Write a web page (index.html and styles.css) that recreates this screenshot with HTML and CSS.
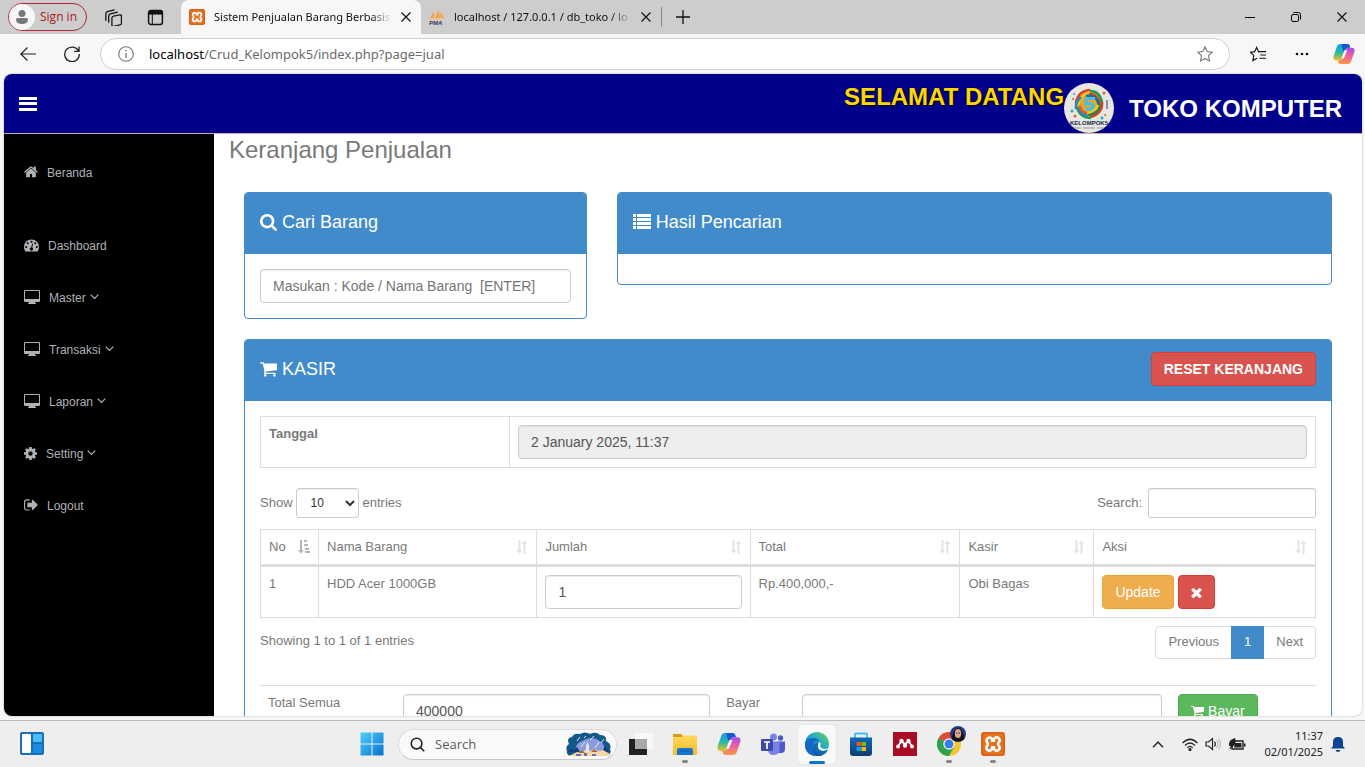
FILE: index.html
```html
<!DOCTYPE html>
<html lang="id">
<head>
<meta charset="utf-8">
<title>Sistem Penjualan Barang Berbasis Web</title>
<link rel="stylesheet" href="styles.css">
</head>
<body>
<svg class="defs" aria-hidden="true">
  <defs>
    <linearGradient id="g-win" x1="0" y1="0" x2="1" y2="1"><stop offset="0" stop-color="#4fd0fb"/><stop offset="1" stop-color="#0571cf"/></linearGradient>
    <linearGradient id="g-cp1" x1="0" y1="0" x2="0" y2="1"><stop offset="0" stop-color="#1b9ce8"/><stop offset=".5" stop-color="#20b9a6"/><stop offset="1" stop-color="#f0c31e"/></linearGradient>
    <linearGradient id="g-cp2" x1="0" y1="0" x2="0" y2="1"><stop offset="0" stop-color="#a44cf0"/><stop offset=".5" stop-color="#f0609a"/><stop offset="1" stop-color="#fa9a48"/></linearGradient>
    <linearGradient id="g-edge" x1="0" y1="1" x2="1" y2="0"><stop offset="0" stop-color="#0d63c5"/><stop offset=".5" stop-color="#1ba4d8"/><stop offset="1" stop-color="#63d84e"/></linearGradient>
    <linearGradient id="g-fold" x1="0" y1="0" x2="0" y2="1"><stop offset="0" stop-color="#ffda5f"/><stop offset="1" stop-color="#fbb922"/></linearGradient>
    <linearGradient id="g-store" x1="0" y1="0" x2="0" y2="1"><stop offset="0" stop-color="#0b6cb8"/><stop offset="1" stop-color="#113c73"/></linearGradient>
  </defs>
  <symbol id="i-copilot" viewBox="0 0 24 24">
    <path d="M8 1h7.500c1.500 0 2.300.8 2.700 2l.5 2h-2.200c-1.500 0-2.400.8-2.900 2.300l-2.900 9C10.200 18 9 19 7 19H3.600C1 19 0 17 .6 14.500L4.200 4C4.800 2 6 1 8 1z" fill="url(#g-cp1)"/>
    <path d="M10 1h5.500c1.500 0 2.300.8 2.700 2l.6 2.300h-2.600c-1.300 0-2.300.7-2.800 2L12 10 9.500 4z" fill="#1557cf"/>
    <path d="M16 23H8.500c-1.500 0-2.300-.8-2.700-2l-.5-2h2.200c1.500 0 2.400-.8 2.900-2.300l2.900-9C13.800 6 15 5.300 17 5.300h3.400C23 5.300 24 7 23.400 9.500L19.800 20c-.6 2-1.800 3-3.800 3z" fill="url(#g-cp2)"/>
    <path d="M12.300 8h3.300l-3.700 9H9.300z" fill="#fff" opacity=".9"/>
  </symbol>
  <symbol id="i-xampp" viewBox="0 0 24 24">
    <rect width="24" height="24" rx="3" fill="#e86f1c"/><rect x="1" y="1" width="22" height="22" rx="2" fill="none" stroke="#c65a18" stroke-width="1"/>
    <path d="M8.500 5.500a3 3 0 0 0-2 5.200q1 1.300 0 2.600a3 3 0 1 0 4.600 3.600v-1.500h1.800v1.500a3 3 0 1 0 4.600-3.600q-1-1.300 0-2.600a3 3 0 1 0-4.600-3.600v1.500h-1.800V7.100a3 3 0 0 0-2.600-1.600z" fill="none" stroke="#fff" stroke-width="2.600"/>
  </symbol>
  <symbol id="i-cart" viewBox="0 0 1792 1792"><path d="M704 1536q0 52-38 90t-90 38-90-38-38-90 38-90 90-38 90 38 38 90zm896 0q0 52-38 90t-90 38-90-38-38-90 38-90 90-38 90 38 38 90zm128-1088v512q0 24-16.500 42.500t-40.500 21.500l-1044 122q13 60 13 70 0 16-24 64h920q26 0 45 19t19 45-19 45-45 19h-1024q-26 0-45-19t-19-45q0-11 8-31.500t16-36 21.500-40 15.500-29.500l-177-823h-204q-26 0-45-19t-19-45 19-45 45-19h256q16 0 28.500 6.500t19.500 15.500 13 24.500 8 26 5.500 29.500 4.500 26h1201q26 0 45 19t19 45z"/></symbol>
  <symbol id="i-desktop" viewBox="0 0 16 14"><path d="M1 0h14a1 1 0 0 1 1 1v10a1 1 0 0 1-1 1h-4v1h1v1H4v-1h1v-1H1a1 1 0 0 1-1-1V1a1 1 0 0 1 1-1zm0 1v8h14V1z" fill-rule="evenodd"/></symbol>
  <symbol id="i-down" viewBox="0 0 9 6"><path d="M.7.700 4.500 4.500 8.300.7" fill="none" stroke="currentColor" stroke-width="1.200"/></symbol>
  <symbol id="i-sort" viewBox="0 0 12 14"><path d="M2.500 0h2v10h2L3.500 13.500.2 10h2.300zM7.500 14h2V4h2L8.500.5 5.500 4h2z"/></symbol>
  <symbol id="i-x" viewBox="0 0 10 10"><path d="M.5.500l9 9M9.500.5l-9 9" fill="none" stroke="currentColor" stroke-width="1.200"/></symbol>
</svg>

<header class="tabs">
  <button class="signin"><svg viewBox="0 0 26 26"><circle cx="13" cy="13" r="13" fill="#f7f7f7"/><circle cx="13" cy="9.500" r="3.500" fill="#777"/><path d="M7 15.500a1.500 1.500 0 0 1 1.500-1.500h9a1.500 1.500 0 0 1 1.500 1.500c0 3-2.500 4.500-6 4.500s-6-1.500-6-4.500z" fill="#777"/></svg>Sign in</button>
  <button class="tool tool-work" aria-label="Workspaces"><svg viewBox="0 0 16 16" fill="none" stroke="#111" stroke-width="1.200"><rect x="6.500" y="5.500" width="9" height="9.500" rx="1.500" transform="skewY(-12) translate(0 3)"/><path d="M3.500 13V6.500Q3.500 5 5 4.500L12 3M.8 11V4.500Q.8 3 2.300 2.500L9 .8"/></svg></button>
  <button class="tool tool-menu" aria-label="Tab actions"><svg viewBox="0 0 16 16" fill="none" stroke="#111" stroke-width="1.400"><rect x="1.500" y="1.500" width="13" height="13" rx="2"/><path d="M1.500 3.500h13" stroke-width="3.500"/><path d="M5 4v10" stroke-width="1"/></svg></button>
  <div class="tab tab-on"><svg class="fav"><use href="#i-xampp"/></svg><span class="tab-t">Sistem Penjualan Barang Berbasis</span><button aria-label="Close tab"><svg class="x"><use href="#i-x"/></svg></button></div>
  <div class="tab"><svg class="fav" viewBox="0 0 16 16"><path d="M1 9.500 5 2v7zM6 9.500 9.500.5 11 9zM11 8l1-5 3.500 6z" fill="#f9a13a"/><path d="M1 10h14.500" stroke="#f7c37f"/><text x="0" y="16" class="pma">PMA</text></svg><span class="tab-t">localhost / 127.0.0.1 / db_toko / lo</span><button aria-label="Close tab"><svg class="x"><use href="#i-x"/></svg></button></div>
  <button class="newtab" aria-label="New tab"><svg viewBox="0 0 14 14"><path d="M7 0v14M0 7h14" stroke="#111" stroke-width="1.300"/></svg></button>
  <div class="winctl">
    <button aria-label="Minimize"><svg viewBox="0 0 10 10"><path d="M0 5.500h10" stroke="#000"/></svg></button>
    <button aria-label="Restore"><svg viewBox="0 0 10 10" fill="none" stroke="#000"><rect x=".5" y="2.500" width="7" height="7" rx="1.500"/><path d="M2.500.5H7.500a2 2 0 0 1 2 2V7.500"/></svg></button>
    <button aria-label="Close"><svg class="x"><use href="#i-x"/></svg></button>
  </div>
</header>

<nav class="bar">
  <button aria-label="Back"><svg viewBox="0 0 16 16" fill="none" stroke="#222" stroke-width="1.200"><path d="M16 8H.8M7.500 1.500.8 8l6.700 6.500"/></svg></button>
  <button aria-label="Reload"><svg viewBox="0 0 16 16" fill="none" stroke="#222" stroke-width="1.300"><path d="M14.500 5A7.300 7.300 0 1 0 15.300 8M15 .5v4.800h-4.800"/></svg></button>
  <div class="omni">
    <svg class="info" viewBox="0 0 16 16" fill="none" stroke="#777" stroke-width="1.100"><circle cx="8" cy="8" r="7.300"/><path d="M8 7v5M8 4v1.500" stroke-width="1.300"/></svg>
    <span class="url"><b>localhost</b>/Crud_Kelompok5/index.php?page=jual</span>
    <svg class="info" viewBox="0 0 16 16" fill="none" stroke="#777" stroke-width="1.100"><path d="M8 .8l2.200 4.700 5 .7-3.700 3.500 1 5.200L8 12.400 3.500 14.900l1-5.200L.8 6.200l5-.7z"/></svg>
  </div>
  <button aria-label="Favorites"><svg viewBox="0 0 17 16" fill="none" stroke="#111" stroke-width="1.200"><path d="M10.500 5.500H9L7 1 5 5.500l-4.500.7L4 9.500 3 15l4.500-2.500M10.500 5.500H17M11 9h6M10 12.500h7"/></svg></button>
  <button aria-label="More"><svg viewBox="0 0 16 16" fill="#111"><circle cx="3" cy="8" r="1.300"/><circle cx="8" cy="8" r="1.300"/><circle cx="13" cy="8" r="1.300"/></svg></button>
  <button class="cp" aria-label="Copilot"><svg><use href="#i-copilot"/></svg></button>
</nav>

<div class="page">
  <header class="top">
    <button class="burger" aria-label="Toggle navigation"><svg viewBox="0 0 18 14" fill="#fff"><path d="M0 0h18v3H0zM0 5h18v3H0zM0 11h18v3H0z"/></svg></button>
    <span class="welcome">SELAMAT DATANG</span>
    <svg class="logo" viewBox="0 0 50 50">
      <circle cx="25" cy="25" r="25" fill="#e6e6e2"/>
      <circle cx="25" cy="21" r="14" fill="#f0a51e"/>
      <g fill="none" stroke-width="2.600">
        <path d="M12 20q2-12 14-13" stroke="#d8402a"/><path d="M14 22q2-12 14-13" stroke="#f4c622"/><path d="M12 26q-1-7 5-12" stroke="#2387c8"/>
        <path d="M26 8q10 0 12 12" stroke="#1d9c58"/><path d="M25 11q9 0 11 12" stroke="#d8402a"/><path d="M22 13q11-2 13 10" stroke="#1a6ba8"/>
        <path d="M38 19q1 11-12 15" stroke="#d8402a"/><path d="M36 21q-1 9-12 11" stroke="#1d8a4c"/><path d="M34 22q-2 6-11 8" stroke="#f4c622"/>
        <path d="M27 35q-11 0-14-11" stroke="#1d9c58"/><path d="M24 33q-8-1-9-9" stroke="#2387c8"/><path d="M23 30q-6 0-7-7" stroke="#e3592b"/>
      </g>
      <path d="M31 15.500h-8.500l-.8 5.500q7.500-1.500 7.300 2.500t-8 2" fill="none" stroke="#48bde6" stroke-width="3.200"/>
      <g fill="#e8612f"><circle cx="40" cy="10" r="1.500"/><circle cx="9" cy="16" r="1"/><circle cx="11" cy="33" r="1.500"/><circle cx="41" cy="32" r="1"/></g>
      <g fill="#2fa6cf"><circle cx="8" cy="28" r="1.500"/><circle cx="38" cy="35" r="1.500"/><circle cx="10" cy="11" r="1"/><path d="M42 17h2v9h-2z" fill="#8596a8"/></g>
      <text x="25" y="42" class="logo-t">KELOMPOK5</text><path d="M10 45h7M33 45h7M19 45h12" stroke="#777" stroke-width=".7"/>
    </svg>
    <span class="brand">TOKO KOMPUTER</span>
  </header>

  <div class="cols">
    <aside class="side">
      <a class="first" href="#"><svg class="i14" viewBox="64 200 1664 1440"><path d="M1472 992v480q0 26-19 45t-45 19h-384v-384h-256v384h-384q-26 0-45-19t-19-45v-480q0-1 .5-3t.5-3l575-474 575 474q1 2 1 6zm223-69l-62 74q-8 9-21 11h-3q-13 0-21-7l-692-577-692 577q-12 8-24 7-13-2-21-11l-62-74q-8-10-7-23.500t11-21.500l719-599q32-26 76-26t76 26l244 204v-195q0-14 9-23t23-9h192q14 0 23 9t9 23v408l219 182q10 8 11 21.500t-7 23.500z"/></svg><span>Beranda</span></a>
      <a href="#"><svg class="i15" viewBox="0 0 16 13"><path fill-rule="evenodd" d="M8 0a8 8 0 0 1 8 8q0 2.600-1.200 4.500l-.8.500H2l-.8-.5Q0 10.600 0 8a8 8 0 0 1 8-8zM8 1.300a1.100 1.100 0 1 0 0 2.200 1.100 1.100 0 0 0 0-2.200zM4 3a1.100 1.100 0 1 0 0 2.200A1.100 1.100 0 0 0 4 3zm8 0a1.100 1.100 0 1 0 0 2.200A1.100 1.100 0 0 0 12 3zM2.300 7a1.100 1.100 0 1 0 0 2.200 1.100 1.100 0 0 0 0-2.200zm11.400 0a1.100 1.100 0 1 0 0 2.200 1.100 1.100 0 0 0 0-2.200zM8.700 4.500 7.700 8.500a1.700 1.700 0 1 0 1 .2l1-4z"/></svg><span>Dashboard</span></a>
      <a href="#"><svg class="i16"><use href="#i-desktop"/></svg><span>Master</span><svg class="dn"><use href="#i-down"/></svg></a>
      <a href="#"><svg class="i16"><use href="#i-desktop"/></svg><span>Transaksi</span><svg class="dn"><use href="#i-down"/></svg></a>
      <a href="#"><svg class="i16"><use href="#i-desktop"/></svg><span>Laporan</span><svg class="dn"><use href="#i-down"/></svg></a>
      <a href="#"><svg class="i13" viewBox="128 128 1536 1536"><path d="M1152 896q0-106-75-181t-181-75-181 75-75 181 75 181 181 75 181-75 75-181zm512-109v222q0 12-8 23t-20 13l-185 28q-19 54-39 91 35 50 107 138 10 12 10 25t-9 23q-27 37-99 108t-94 71q-12 0-26-9l-138-108q-44 23-91 38-16 136-29 186-7 28-36 28h-222q-14 0-24.500-8.500t-11.500-21.500l-28-184q-49-16-90-37l-141 107q-10 9-25 9-14 0-25-11-126-114-165-168-7-10-7-23 0-12 8-23 15-21 51-66.500t54-70.500q-27-50-41-99l-183-27q-13-2-21-12.500t-8-23.500v-222q0-12 8-23t19-13l186-28q14-46 39-92-40-57-107-138-10-12-10-24 0-10 9-23 26-36 98.500-107.500t94.500-71.500q13 0 26 10l138 107q44-23 91-38 16-136 29-186 7-28 36-28h222q14 0 24.500 8.500t11.500 21.500l28 184q49 16 90 37l142-107q9-9 24-9 13 0 25 10 129 119 165 170 7 8 7 22 0 12-8 23-15 21-51 66.500t-54 70.500q26 50 41 98l183 28q13 2 21 12.500t8 23.500z"/></svg><span>Setting</span><svg class="dn"><use href="#i-down"/></svg></a>
      <a href="#"><svg class="i14" viewBox="64 100 1600 1600"><path d="M704 1440q0 4 1 20t.5 26.500-3 23.500-10 19.500-20.500 6.500h-320q-119 0-203.500-84.500t-84.500-203.500v-704q0-119 84.500-203.500t203.500-84.500h320q13 0 22.500 9.500t9.500 22.500q0 4 1 20t.5 26.500-3 23.500-10 19.500-20.500 6.500h-320q-66 0-113 47t-47 113v704q0 66 47 113t113 47h312l11.500 1 11.500 3 8 5.500 7 9 2 13.500zm928-544q0 26-19 45l-544 544q-19 19-45 19t-45-19-19-45v-288h-448q-26 0-45-19t-19-45v-384q0-26 19-45t45-19h448v-288q0-26 19-45t45-19 45 19l544 544q19 19 19 45z"/></svg><span>Logout</span></a>
    </aside>

    <main class="main">
      <h1>Keranjang Penjualan</h1>
      <div class="row">
        <div class="c4"><section class="panel">
          <h2 class="ph"><svg viewBox="64 128 1664 1664"><path d="M1216 832q0-185-131.500-316.500t-316.500-131.500-316.500 131.500-131.500 316.500 131.500 316.500 316.500 131.500 316.500-131.500 131.500-316.500zm512 832q0 52-38 90t-90 38q-54 0-90-38l-343-342q-179 124-399 124-143 0-273.500-55.500t-225-150-150-225-55.500-273.500 55.500-273.500 150-225 225-150 273.500-55.500 273.500 55.500 225 150 150 225 55.500 273.500q0 220-124 399l343 343q37 37 37 90z"/></svg>Cari Barang</h2>
          <div class="pb"><input class="fc" type="text" aria-label="Cari Barang" placeholder="Masukan : Kode / Nama Barang &nbsp;[ENTER]"></div>
        </section></div>
        <div class="c8"><section class="panel">
          <h2 class="ph"><svg class="list" viewBox="0 0 18 16"><path d="M0 0h3v3H0zM4 0h14v3H4zM0 4h3v3H0zM4 4h14v3H4zM0 8h3v3H0zM4 8h14v3H4zM0 12h3v3H0zM4 12h14v3H4z"/></svg>Hasil Pencarian</h2>
          <div class="pb"></div>
        </section></div>
      </div>
      <section class="panel kasir">
        <div class="ph"><h2><svg viewBox="64 128 1664 1664"><use href="#i-cart" width="1792" height="1792"/></svg>KASIR</h2><button class="btn red"><b>RESET KERANJANG</b></button></div>
        <div class="pb">
          <table class="tb date"><tr><th scope="row"><label for="tgl">Tanggal</label></th><td><input id="tgl" class="fc" type="text" value="2 January 2025, 11:37" readonly></td></tr></table>
          <div class="ctl">
            <label>Show <select class="sm"><option>10</option><option>25</option></select> entries</label>
            <label>Search: <input class="sm find" type="search"></label>
          </div>
          <table class="tb items">
            <colgroup><col class="k1"><col class="k2"><col class="k3"><col class="k4"><col class="k5"><col></colgroup>
            <thead><tr>
              <th><div>No<svg class="asc" viewBox="0 0 12 14"><path d="M2 0h2v10h2L3 13.500 0 10h2zM6 0h3v2H6zM6 4h4v2H6zM7 8h4v2H7zM7 11h5v2H7z"/></svg></div></th>
              <th><div>Nama Barang<svg><use href="#i-sort"/></svg></div></th>
              <th><div>Jumlah<svg><use href="#i-sort"/></svg></div></th>
              <th><div>Total<svg><use href="#i-sort"/></svg></div></th>
              <th><div>Kasir<svg><use href="#i-sort"/></svg></div></th>
              <th><div>Aksi<svg><use href="#i-sort"/></svg></div></th>
            </tr></thead>
            <tbody><tr>
              <td>1</td><td>HDD Acer 1000GB</td><td><input class="fc" type="text" aria-label="Jumlah" value="1"></td><td>Rp.400,000,-</td><td>Obi Bagas</td>
              <td><div class="acts"><button class="btn amber">Update</button><button class="btn red" aria-label="Hapus"><svg viewBox="256 256 1280 1280"><path d="M1490 1322q0 40-28 68l-136 136q-28 28-68 28t-68-28l-294-294-294 294q-28 28-68 28t-68-28l-136-136q-28-28-28-68t28-68l294-294-294-294q-28-28-28-68t28-68l136-136q28-28 68-28t68 28l294 294 294-294q28-28 68-28t68 28l136 136q28 28 28 68t-28 68l-294 294 294 294q28 28 28 68z"/></svg></button></div></td>
            </tr></tbody>
          </table>
          <div class="foot"><span>Showing 1 to 1 of 1 entries</span><div class="pager"><a href="#">Previous</a><a class="on" href="#">1</a><a href="#">Next</a></div></div>
          <table class="sum"><tr>
            <td class="s1"><label for="tot">Total Semua</label></td><td class="s2"><input id="tot" class="fc" type="text" value="400000"></td>
            <td class="s3"><label for="byr">Bayar</label></td><td class="s4"><input id="byr" class="fc" type="text"></td>
            <td><button class="btn green"><svg viewBox="64 128 1664 1664"><use href="#i-cart" width="1792" height="1792"/></svg>Bayar</button></td>
          </tr></table>
        </div>
      </section>
    </main>
  </div>
</div>

<footer class="task">
  <div class="tl"><button aria-label="Widgets"><svg viewBox="0 0 24 24"><rect width="24" height="23" rx="2" fill="#1b6fb5"/><rect x="2" y="2" width="9" height="19" rx="1" fill="#fff"/><rect x="13" y="2" width="9" height="8" rx="1" fill="#46c0f4"/><rect x="13" y="12" width="9" height="9" rx="1" fill="#1a8be0"/></svg></button></div>
  <div class="tc">
    <button aria-label="Start"><svg viewBox="0 0 24 24" fill="url(#g-win)"><path d="M.5.500h11v11H.5zM12.500.5h11v11h-11zM.5 12.500h11v11H.5zM12.500 12.500h11v11h-11z"/></svg></button>
    <label class="find-w"><svg class="mag" viewBox="0 0 16 16" fill="none" stroke="#222" stroke-width="1.700"><circle cx="7" cy="7" r="5.700"/><path d="M11 11l4.200 4.200"/></svg><input type="text" aria-label="Search" placeholder="Search">
      <svg class="town" viewBox="0 0 46 25"><path d="M1 19Q-1 14 3 12 0 6 6 5 8 1 14 2q5-3 10 0 6-3 10 1 7 0 6 6 6 3 4 8 2 4-2 7H6q-6 0-5-5z" fill="#13588a"/><path d="M10 20q-2-8 6-11 10-6 18 0 6 4 4 11z" fill="#8b9be0"/><path d="M15 15l4-5M24 8l4-4M29 16l4-6M35 11l3-4M11 9l3-4M18 6l2-2" stroke="#dbe9fb"/><path d="M2 20l3-4 3 3 3-4 3 5M36 20l3-6 4 6z" fill="#123f74"/><path d="M3 24l8-4 5 1 4-4 4 2 4-2 5 2 4-1 7 4-2 2z" fill="#f2d9a2"/><path d="M20 20v-6l1.500-5 1.500 5v6z" fill="#e7e5f3"/><path d="M13 21l3-3 3 3zM25 20l3-3 4 3z" fill="#b2673c"/><path d="M10 24h5v-2h-5zM18 24h3v-3h-3zM26 24h4v-2h-4z" fill="#6d6db3"/></svg></label>
    <button aria-label="Task view"><svg viewBox="0 0 24 24"><path d="M0 7h18v16H0z" fill="#222"/><path d="M6 1h18v16H6z" fill="#f9f9f9"/><path d="M6 7h12v10H6z" fill="#a9a9a9"/></svg></button>
    <button class="run" aria-label="Explorer"><svg viewBox="0 0 24 24"><path d="M0 2h8l3 3h-11z" fill="#d99c12"/><path d="M0 5l9 0 2-1.500h13V23H0z" fill="url(#g-fold)"/><path d="M4 23v-5q0-2 2-2h12q2 0 2 2v5z" fill="#1479cc"/><path d="M7 19h10" stroke="#0d569c"/></svg></button>
    <button aria-label="Copilot"><svg><use href="#i-copilot"/></svg></button>
    <button aria-label="Teams"><svg viewBox="0 0 24 24"><circle cx="12.500" cy="5" r="3.500" fill="#7b83eb"/><circle cx="19.500" cy="6" r="2.700" fill="#5059c9"/><path d="M16 9.500h8V17q0 4-4 4h-4z" fill="#5059c9"/><path d="M7 9.500h11.500V17q0 6-6 6-5.500 0-5.500-6z" fill="#7b83eb"/><rect y="7" width="12" height="12" rx="1" fill="#4149a8"/><path d="M3 10h6M6 10v7" stroke="#fff" stroke-width="1.700"/></svg></button>
    <button class="act" aria-label="Edge"><svg viewBox="0 0 24 24"><circle cx="12" cy="12" r="12" fill="url(#g-edge)"/><path d="M0 12q1-6 8-6 6 0 7 5 0-2-3-2-4 0-4 6 1 8 9 8-2 1-5 1Q0 24 0 12z" fill="#1268c4"/><path d="M8 17q0-6 5-7-1 9 10 8-3 6-9 6-6-1-6-7z" fill="#0b4d9e" opacity=".65"/><path d="M13 13q0-2 1.500-3 2 2 .5 4.500 2 4 9 1.500-5 5-10 1.500-2-2-1-4.500z" fill="#f4f8fb"/></svg></button>
    <button aria-label="Store"><svg viewBox="0 0 24 24"><path d="M6 6V2.500q0-1 1-1h10q1 0 1 1V6" fill="none" stroke="#38bdf0" stroke-width="1.800"/><path d="M1 5.500h22V21q0 3-3 3H4q-3 0-3-3z" fill="url(#g-store)"/><path d="M7.500 10H12v4H7.500z" fill="#f25022"/><path d="M12.500 10H17v4h-4.500z" fill="#7fba00"/><path d="M7.500 15H12v4H7.500z" fill="#00a4ef"/><path d="M12.500 15H17v4h-4.500z" fill="#ffb900"/></svg></button>
    <button aria-label="Mendeley"><svg viewBox="0 0 24 24"><path d="M0 0h24v24H0z" fill="#a70e26"/><g fill="#fff"><circle cx="8.500" cy="9" r="2.200"/><circle cx="15.500" cy="9" r="2.200"/><circle cx="5" cy="14.500" r="1.900"/><circle cx="12" cy="13.500" r="2.200"/><circle cx="19" cy="14.500" r="1.900"/><path d="M5 14l3.500-4.500 3.500 2.500 3.500-2.500 3.500 4.500" stroke="#fff" stroke-width="1.800" fill="none"/></g></svg></button>
    <button class="run" aria-label="Chrome"><svg class="big" viewBox="0 0 30 30"><circle cx="12" cy="18" r="12" fill="#f7c52b"/><path d="M12 18 1.600 12A12 12 0 0 1 22.400 12z" fill="#dd4b3b"/><path d="M12 18 1.600 12A12 12 0 0 0 12 30l5-9z" fill="#2da14e"/><circle cx="12" cy="18" r="5.700" fill="#fff"/><circle cx="12" cy="18" r="4.500" fill="#3b7de8"/><circle cx="21" cy="8" r="8" fill="#243a86"/><path d="M14.500 13q2-11 6.500-11t6.500 11q-6.500 5-13 0z" fill="#17121a"/><ellipse cx="21" cy="7.500" rx="3.200" ry="4.500" fill="#d9a593"/><path d="M19 7h1.500M21.500 7H23" stroke="#4a2a26"/></svg></button>
    <button class="run" aria-label="XAMPP"><svg><use href="#i-xampp"/></svg></button>
  </div>
  <div class="tr">
    <svg class="up" viewBox="0 0 12 7"><path d="M1 6.300 6 1l5 5.300" fill="none" stroke="#222" stroke-width="1.400"/></svg>
    <svg class="net" viewBox="0 0 16 13" fill="none" stroke="#222" stroke-width="1.200"><path d="M.5 5Q8-2.500 15.500 5M3 7.500q5-5 10 0M5.300 9.800q2.700-2.800 5.400 0"/><circle cx="8" cy="11.500" r="1" fill="#222"/></svg>
    <svg class="vol" viewBox="0 0 17 14" fill="none" stroke="#222" stroke-width="1.200"><path d="M1 5h2.500L7.500 1.500v11L3.500 9H1zM9.500 4.500q1.700 2.500 0 5"/><path d="M11.500 3q3 4 0 8M13.500 1.500q4 5.500 0 11" stroke="#bbb"/></svg>
    <svg class="bat" viewBox="0 0 17 14"><path d="M6 4h8v8H3V9" fill="none" stroke="#222" stroke-width="1.400"/><path d="M6 6h6.500v4.500H5zM15 6.500h1.500v3H15zM0 9Q-1 3 6 1q2 6-2 8.500L1 12l-.5-1 1.500-2z" fill="#222"/></svg>
    <div class="clock"><span>11:37</span><span>02/01/2025</span></div>
    <svg class="bell" viewBox="0 0 14 15" fill="#0a4595"><path d="M7 0q5 0 5 5v4l2 2.500H0L2 9V5q0-5 5-5zM4.500 13h5q-.5 2-2.500 2t-2.500-2z"/></svg>
  </div>
</footer>
</body>
</html>
```
FILE: styles.css
```css
* { box-sizing: border-box; }
body { margin: 0; height: 100vh; display: flex; flex-direction: column; overflow: hidden; background: #f7f7f7; font: 13px/20px "Liberation Sans", Arial, sans-serif; color: #797979; }
button { border: 0; background: none; padding: 0; font: inherit; color: inherit; display: flex; align-items: center; justify-content: center; }
a { color: inherit; text-decoration: none; }
svg { display: block; flex: none; }
svg:not([fill]) { fill: currentColor; }
.defs { position: absolute; width: 0; height: 0; }

/* browser tabs */
.tabs { flex: none; height: 34px; background: #cdcdcd; display: flex; align-items: center; color: #111; font: 12px/16px "Open Sans", "Noto Sans", sans-serif; }
.signin { width: 79px; height: 28px; margin-left: 8px; border: 1px solid #b3262b; border-radius: 14px; color: #a8191e; justify-content: flex-start; gap: 5px; font-size: 12px; }
.signin svg { width: 26px; height: 26px; }
.tool { width: 17px; height: 17px; }
.tool svg { width: 17px; height: 17px; }
.tool-work { margin-left: 18px; }
.tool-menu { margin: 0 17px 0 25px; }
.tab { height: 34px; width: 240px; padding: 0 10px 0 8px; display: flex; align-items: center; gap: 9px; }
.tab-on { background: #f7f7f7; border-radius: 8px 8px 0 0; }
.fav { width: 16px; height: 16px; }
.pma { font: italic bold 6px "Liberation Sans", sans-serif; fill: #33356b; }
.tab-t { flex: 1; min-width: 0; overflow: hidden; white-space: nowrap; font: 11px/16px "Noto Sans", "Open Sans", sans-serif; mask-image: linear-gradient(90deg, #000 88%, transparent); }
.x { width: 10px; height: 10px; color: #111; }
.newtab { padding-left: 14px; height: 20px; border-left: 1px solid #888; }
.newtab svg { width: 14px; height: 14px; }
.winctl { margin-left: auto; display: flex; }
.winctl button { width: 46px; height: 34px; }
.winctl svg { width: 10px; height: 10px; }

/* address bar */
.bar { flex: none; height: 40px; display: flex; align-items: center; padding: 0 1px 0 6px; }
.bar > button { width: 44px; height: 36px; }
.bar > button svg { width: 16px; height: 16px; }
.bar > .cp { width: 40px; }
.bar > .cp svg { width: 22px; height: 22px; }
.omni { flex: 1; height: 32px; margin: 0 6px; padding: 0 16px 0 17px; border: 1px solid #d0d0d0; border-radius: 16px; background: #fff; display: flex; align-items: center; gap: 15px; }
.info { width: 16px; height: 16px; }
.url { flex: 1; font: 13px/18px "Noto Sans", "Open Sans", sans-serif; color: #6b6b6b; }
.url b { font-weight: 400; color: #000; }

/* application */
.page { flex: 1; min-height: 0; margin: 0 3px 4px 4px; border-radius: 8px; overflow: hidden; background: #fff; box-shadow: 0 0 2px #aaa; display: flex; flex-direction: column; }
.top { flex: none; height: 60px; background: #00008b; border-bottom: 1px solid #c9aaa2; display: flex; align-items: center; padding: 0 20px 0 15px; font-size: 24px; line-height: 26px; font-weight: 700; }
.burger { margin-right: auto; }
.burger svg { width: 18px; height: 14px; }
.welcome { color: #ffd700; text-shadow: 1px 1px 2px #000; align-self: flex-start; padding-top: 10px; }
.logo { width: 50px; height: 50px; align-self: flex-end; margin-right: 15px; }
.logo-t { font: bold 6px "Liberation Sans", sans-serif; fill: #222c3c; text-anchor: middle; }
.brand { color: #fff; padding-top: 10px; }
.cols { flex: 1; min-height: 0; display: flex; }
.side { flex: none; width: 210px; background: #000; color: #aeb2b7; font-size: 12px; padding-top: 12px; }
.side a { display: flex; align-items: center; height: 52px; padding-left: 20px; gap: 9px; }
.side .first { margin-bottom: 21px; }
.side span { padding-top: 2px; }
.side span + svg { margin: 0 0 0 -5px; }
.i16 { width: 16px; height: 14px; margin-bottom: 1px; }
.i15 { width: 15px; height: 13px; }
.i14 { width: 14px; height: 14px; }
.i13 { width: 13px; height: 13px; }
.dn { width: 9px; height: 6px; }
.main { flex: 1; min-width: 0; padding: 0 30px; overflow: hidden; }
h1 { margin: 3px 0 29px -15px; font: 24px/26px "Liberation Sans", Arial, sans-serif; }
h2 { margin: 0; font-weight: 400; }
.row { display: flex; align-items: flex-start; margin: 0 -15px; }
.c4 { width: 33.333%; padding: 0 15px; }
.c8 { width: 66.667%; padding: 0 15px; }
.panel { border: 1px solid #428bca; border-radius: 4px; background: #fff; margin-bottom: 20px; overflow: hidden; }
.ph { background: #428bca; color: #fff; font-size: 18px; line-height: 20px; height: 61px; padding: 0 15px 3px; display: flex; align-items: center; }
.ph svg { width: 17px; height: 17px; margin-right: 5px; }
.ph .list { width: 18px; height: 16px; }
.ph h2 { display: flex; align-items: center; margin-right: auto; font-size: 18px; }
.pb { padding: 15px; }
.fc { display: block; width: 100%; height: 34px; padding: 6px 12px; border: 1px solid #ccc; border-radius: 4px; background: #fff; box-shadow: inset 0 1px 1px rgba(0,0,0,.075); font: 14px/20px "Liberation Sans", Arial, sans-serif; color: #555; }
.fc::placeholder { color: #757575; }
.fc[readonly] { background: #eee; }
.btn { height: 34px; padding: 0 12px; border: 1px solid; border-radius: 4px; color: #fff; font-size: 14px; line-height: 20px; }
.red { background: #d9534f; border-color: #d43f3a; }
.amber { background: #f0ad4e; border-color: #eea236; }
.green { background: #5cb85c; border-color: #4cae4c; }
.green svg { width: 13px; height: 13px; margin-right: 4px; }
.acts { display: flex; gap: 4px; }
.acts svg { width: 11px; height: 11px; }
.tb { width: 100%; border-collapse: collapse; table-layout: fixed; }
.tb th, .tb td { border: 1px solid #ddd; padding: 8px; text-align: left; vertical-align: top; line-height: 18px; }
.date th { width: 249px; }
.ctl { display: flex; justify-content: space-between; align-items: center; margin: 20px 0 11px; }
.ctl label { display: flex; align-items: center; gap: 3px; height: 30px; line-height: 26px; }
.sm { height: 30px; padding: 5px 10px; border: 1px solid #ccc; border-radius: 3px; background: #fff; color: #333; font: 12px/18px "Liberation Sans", Arial, sans-serif; box-shadow: inset 0 1px 1px rgba(0,0,0,.075); }
select.sm { width: 63px; margin-right: 1px; }
.find { width: 168px; margin-left: 3px; }
.k1 { width: 5.5%; } .k2 { width: 20.7%; } .k3 { width: 20.2%; } .k4 { width: 19.9%; } .k5 { width: 12.7%; }
.items th { font-weight: 400; border-bottom-width: 3px; }
.items th div { display: flex; justify-content: space-between; align-items: center; }
.items th svg { width: 12px; height: 14px; color: #e4e4e4; }
.items th .asc { color: #b5b5b5; }
.foot { display: flex; justify-content: space-between; align-items: flex-start; padding-top: 8px; margin-bottom: 26px; }
.foot > span { padding-top: 5px; }
.pager { display: flex; border: 1px solid #ddd; border-radius: 4px; }
.pager a { padding: 5px 12px 6px; }
.pager .on { background: #428bca; color: #fff; margin: -1px 0; padding: 6px 13px 7px; }
.sum { width: 100%; table-layout: fixed; border-collapse: collapse; border-top: 1px solid #ddd; }
.sum td { padding: 8px; vertical-align: top; line-height: 18px; }
.s1 { width: 135px; } .s2 { width: 30.6%; } .s3 { width: 76px; } .s4 { width: 35.6%; }

/* taskbar */
.task { flex: none; height: 47px; background: #eee; border-top: 1px solid #bdbdbd; display: grid; grid-template-columns: 1fr auto 1fr; align-items: center; font: 12px/16px "Open Sans", "Noto Sans", sans-serif; color: #222; }
.tl svg { width: 24px; height: 24px; }
.tl { padding-left: 20px; }
.tc { display: flex; align-items: center; }
.tc button { width: 44px; height: 46px; position: relative; }
.tc button svg { width: 24px; height: 24px; }
.tc button .big { width: 30px; height: 30px; margin: -6px -6px 0 0; }
.run::after, .act::after { content: ""; position: absolute; bottom: 4px; left: 19px; width: 6px; height: 3px; border-radius: 2px; background: #888; }
.tc .act { width: 38px; height: 39px; margin: 0 3px; background: #f9f9f9; border-radius: 4px; box-shadow: 0 0 1px #bbb; }
.act::after { left: 11px; bottom: 0; width: 16px; background: #0078d4; }
.find-w { width: 219px; height: 31px; margin: 0 2px 0 4px; border: 1px solid #ddd; border-bottom-color: #c8c8c8; border-radius: 16px; background: #fafafa; display: flex; align-items: center; padding: 0 4px 0 11px; gap: 10px; }
.find-w input { flex: 1; min-width: 0; border: 0; padding: 0; background: none; font: 13px/18px "Open Sans", "Noto Sans", sans-serif; }
.find-w input::placeholder { color: #5c5c5c; }
.mag { width: 15px; height: 15px; }
.town { width: 46px; height: 25px; }
.tr { display: flex; align-items: center; justify-content: flex-end; padding-right: 20px; }
.up { width: 12px; height: 7px; margin-right: 18px; }
.net { width: 16px; height: 13px; margin-right: 7px; }
.vol { width: 17px; height: 14px; margin-right: 7px; }
.bat { width: 17px; height: 14px; margin-right: 18px; }
.clock { display: flex; flex-direction: column; align-items: flex-end; font: 11px/16px "Noto Sans", "Open Sans", sans-serif; margin-right: 8px; }
.bell { width: 14px; height: 15px; }
```
